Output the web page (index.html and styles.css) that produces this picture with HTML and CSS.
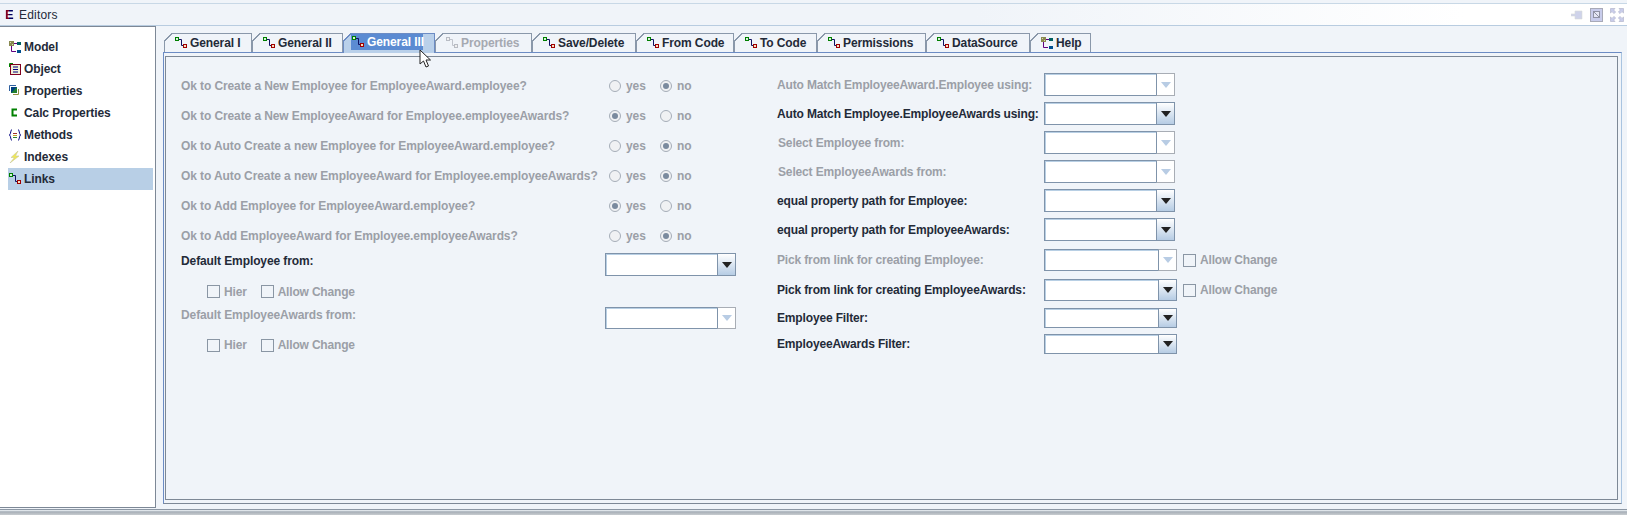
FILE: index.html
```html
<!DOCTYPE html>
<html lang="en">
<head>
    <meta charset="UTF-8">
    <title>Editors</title>
    <link rel="stylesheet" href="styles.css">
</head>
<body>
    <svg class="icon-defs" width="0" height="0">
        <symbol id="link" viewBox="0 0 12 12">
            <path d="M4 2.5H6.5V8.5H8" fill="none" stroke="#101060"/>
            <rect x="0.5" y="0.5" width="3" height="3" fill="#d8f0d8" stroke="#008000"/>
            <rect x="8.5" y="7.5" width="3" height="3" fill="#f8e0c0" stroke="#a00000"/>
        </symbol>
        <symbol id="link-off" viewBox="0 0 12 12">
            <path d="M4 2.5H6.5V8.5H8" fill="none" stroke="#c0c4cc"/>
            <rect x="0.5" y="0.5" width="3" height="3" fill="#f0f0f0" stroke="#b8bcc4"/>
            <rect x="8.5" y="7.5" width="3" height="3" fill="#f0f0f0" stroke="#b8bcc4"/>
        </symbol>
        <symbol id="model" viewBox="0 0 12 12">
            <rect x="0" y="0" width="5" height="5" fill="#8a8a50"/>
            <rect x="1" y="1" width="1" height="1" fill="#d8d8b0"/>
            <rect x="3" y="3" width="1" height="1" fill="#d8d8b0"/>
            <path d="M2.5 5V10.5H7M5 2.5H8" fill="none" stroke="#600080"/>
            <rect x="8" y="1" width="4" height="3" fill="#006060"/>
            <rect x="8" y="9" width="4" height="3" fill="#005090"/>
        </symbol>
    </svg>

    <div class="top-edge"></div>

    <header class="title-bar">
        <span class="title-logo">E</span>
        <span class="title-text">Editors</span>
        <div class="title-tools">
            <svg width="12" height="10" viewBox="0 0 12 10">
                <path d="M0 4H4V1H11V9H4V6H0Z" fill="#cfd3ea" stroke="#d8dcd8" stroke-width="0.6"/>
            </svg>
            <svg width="13" height="14" viewBox="0 0 13 14">
                <rect x="0.5" y="0.5" width="12" height="13" fill="#c8cceb" stroke="#a8aab8"/>
                <rect x="3.5" y="3.5" width="6" height="6" fill="#e4e6f4" stroke="#8f92a4"/>
                <path d="M3 3L10 10" stroke="#8f92a4"/>
            </svg>
            <svg width="14" height="14" viewBox="0 0 14 14" fill="#c8cceb" stroke="#b4b8cc" stroke-width="0.7">
                <path d="M0.5 0.5H5L3.6 2L5.6 4L4 5.6L2 3.6L0.5 5Z"/>
                <path d="M13.5 0.5H9L10.4 2L8.4 4L10 5.6L12 3.6L13.5 5Z"/>
                <path d="M0.5 13.5H5L3.6 12L5.6 10L4 8.4L2 10.4L0.5 9Z"/>
                <path d="M13.5 13.5H9L10.4 12L8.4 10L10 8.4L12 10.4L13.5 9Z"/>
            </svg>
        </div>
    </header>

    <div class="workspace">
        <!-- left tree -->
        <nav class="sidebar">
            <div class="side-item">
                <svg class="side-icon" viewBox="0 0 12 12"><use href="#model"/></svg>Model
            </div>
            <div class="side-item">
                <svg class="side-icon" viewBox="0 0 12 12">
                    <rect x="1.5" y="1.5" width="10" height="10" fill="#f0f0d8" stroke="#800020"/>
                    <path d="M0.5 4V0.5H4" fill="none" stroke="#008000"/>
                    <path d="M4 4H9M4 6.5H9M4 9H9" stroke="#000080" stroke-width="1.2"/>
                </svg>Object
            </div>
            <div class="side-item">
                <svg class="side-icon" viewBox="0 0 12 12">
                    <path d="M0.5 6V0.5H7" fill="none" stroke="#3060a0"/>
                    <rect x="2" y="2" width="6" height="6" fill="#004080"/>
                    <path d="M8 2L2 8H8Z" fill="#208030"/>
                    <path d="M9.5 4V9.5H4" fill="none" stroke="#909040"/>
                </svg>Properties
            </div>
            <div class="side-item">
                <svg class="side-icon" viewBox="0 0 12 12">
                    <path d="M8 2.5H3.5V8.5H8" fill="none" stroke="#008000" stroke-width="2"/>
                </svg>Calc Properties
            </div>
            <div class="side-item">
                <svg class="side-icon" viewBox="0 0 12 12">
                    <path d="M3 0.5C1.5 0.5 2 5 0.5 6C2 7 1.5 11.5 3 11.5M9 0.5C10.5 0.5 10 5 11.5 6C10 7 10.5 11.5 9 11.5" fill="none" stroke="#000080"/>
                    <path d="M4 4.5H8" stroke="#a03030"/>
                    <path d="M4 6.5H8" stroke="#c0a020"/>
                    <path d="M4 8.5H8" stroke="#308030"/>
                </svg>Methods
            </div>
            <div class="side-item">
                <svg class="side-icon" viewBox="0 0 12 12">
                    <path d="M9 0L2 6.5H5.5L1 12L10 5H6.5Z" fill="#f2ea50" stroke="#c8c8a0" stroke-width="0.6"/>
                </svg>Indexes
            </div>
            <div class="side-item side-item-active">
                <svg class="side-icon" viewBox="0 0 12 12"><use href="#link"/></svg>Links
            </div>
        </nav>

        <main class="editor">
            <div class="tabs">
                <div class="tab tab-1"><svg class="tab-icon"><use href="#link"/></svg>General I</div>
                <div class="tab tab-2"><svg class="tab-icon"><use href="#link"/></svg>General II</div>
                <div class="tab tab-3 tab-active"><span class="tab-focus"><svg class="tab-icon"><use href="#link"/></svg>General III</span></div>
                <div class="tab tab-4 tab-off"><svg class="tab-icon"><use href="#link-off"/></svg>Properties</div>
                <div class="tab tab-5"><svg class="tab-icon"><use href="#link"/></svg>Save/Delete</div>
                <div class="tab tab-6"><svg class="tab-icon"><use href="#link"/></svg>From Code</div>
                <div class="tab tab-7"><svg class="tab-icon"><use href="#link"/></svg>To Code</div>
                <div class="tab tab-8"><svg class="tab-icon"><use href="#link"/></svg>Permissions</div>
                <div class="tab tab-9"><svg class="tab-icon"><use href="#link"/></svg>DataSource</div>
                <div class="tab tab-10"><svg class="tab-icon"><use href="#model"/></svg>Help</div>
            </div>

            <div class="pane">
                <div class="pane-inner">
                    <section class="col-left">
                        <div class="q-row">
                            <span class="q-label off">Ok to Create a New Employee for EmployeeAward.employee?</span>
                            <span class="opt off"><i class="radio"></i>yes</span>
                            <span class="opt off"><i class="radio radio-on"></i>no</span>
                        </div>
                        <div class="q-row">
                            <span class="q-label off">Ok to Create a New EmployeeAward for Employee.employeeAwards?</span>
                            <span class="opt off"><i class="radio radio-on"></i>yes</span>
                            <span class="opt off"><i class="radio"></i>no</span>
                        </div>
                        <div class="q-row">
                            <span class="q-label off">Ok to Auto Create a new Employee for EmployeeAward.employee?</span>
                            <span class="opt off"><i class="radio"></i>yes</span>
                            <span class="opt off"><i class="radio radio-on"></i>no</span>
                        </div>
                        <div class="q-row">
                            <span class="q-label off">Ok to Auto Create a new EmployeeAward for Employee.employeeAwards?</span>
                            <span class="opt off"><i class="radio"></i>yes</span>
                            <span class="opt off"><i class="radio radio-on"></i>no</span>
                        </div>
                        <div class="q-row">
                            <span class="q-label off">Ok to Add Employee for EmployeeAward.employee?</span>
                            <span class="opt off"><i class="radio radio-on"></i>yes</span>
                            <span class="opt off"><i class="radio"></i>no</span>
                        </div>
                        <div class="q-row">
                            <span class="q-label off">Ok to Add EmployeeAward for Employee.employeeAwards?</span>
                            <span class="opt off"><i class="radio"></i>yes</span>
                            <span class="opt off"><i class="radio radio-on"></i>no</span>
                        </div>

                        <div class="default-row">
                            <span class="default-label">Default Employee from:</span>
                            <div class="combo combo-left"><div class="combo-field"></div><div class="combo-btn"><b></b></div></div>
                        </div>
                        <div class="check-row">
                            <span class="check off"><i class="box"></i>Hier</span>
                            <span class="check off"><i class="box"></i>Allow Change</span>
                        </div>
                        <div class="default-row default-row-2">
                            <span class="default-label off">Default EmployeeAwards from:</span>
                            <div class="combo combo-left combo-off"><div class="combo-field"></div><div class="combo-btn"><b></b></div></div>
                        </div>
                        <div class="check-row check-row-2">
                            <span class="check off"><i class="box"></i>Hier</span>
                            <span class="check off"><i class="box"></i>Allow Change</span>
                        </div>
                    </section>

                    <section class="col-right">
                        <div class="m-row">
                            <span class="m-label off">Auto Match EmployeeAward.Employee using:</span>
                            <div class="combo combo-off"><div class="combo-field"></div><div class="combo-btn"><b></b></div></div>
                        </div>
                        <div class="m-row">
                            <span class="m-label">Auto Match Employee.EmployeeAwards using:</span>
                            <div class="combo"><div class="combo-field"></div><div class="combo-btn"><b></b></div></div>
                        </div>
                        <div class="m-row">
                            <span class="m-label m-label-in off">Select Employee from:</span>
                            <div class="combo combo-off"><div class="combo-field"></div><div class="combo-btn"><b></b></div></div>
                        </div>
                        <div class="m-row">
                            <span class="m-label m-label-in off">Select EmployeeAwards from:</span>
                            <div class="combo combo-off"><div class="combo-field"></div><div class="combo-btn"><b></b></div></div>
                        </div>
                        <div class="m-row">
                            <span class="m-label">equal property path for Employee:</span>
                            <div class="combo"><div class="combo-field"></div><div class="combo-btn"><b></b></div></div>
                        </div>
                        <div class="m-row m-row-last">
                            <span class="m-label">equal property path for EmployeeAwards:</span>
                            <div class="combo"><div class="combo-field"></div><div class="combo-btn"><b></b></div></div>
                        </div>
                        <div class="m-row m-row-pick">
                            <span class="m-label off">Pick from link for creating Employee:</span>
                            <div class="combo combo-wide combo-off"><div class="combo-field"></div><div class="combo-btn"><b></b></div></div>
                            <span class="check check-side off"><i class="box"></i>Allow Change</span>
                        </div>
                        <div class="m-row m-row-pick m-row-pick-end">
                            <span class="m-label">Pick from link for creating EmployeeAwards:</span>
                            <div class="combo combo-wide"><div class="combo-field"></div><div class="combo-btn"><b></b></div></div>
                            <span class="check check-side off"><i class="box"></i>Allow Change</span>
                        </div>
                        <div class="m-row m-row-filter">
                            <span class="m-label">Employee Filter:</span>
                            <div class="combo combo-wide"><div class="combo-field"></div><div class="combo-btn"><b></b></div></div>
                        </div>
                        <div class="m-row m-row-filter">
                            <span class="m-label">EmployeeAwards Filter:</span>
                            <div class="combo combo-wide"><div class="combo-field"></div><div class="combo-btn"><b></b></div></div>
                        </div>
                    </section>
                </div>
            </div>

            <!-- mouse pointer caught in the screenshot -->
            <svg class="pointer" width="13" height="20" viewBox="0 0 13 20">
                <path d="M1 1V15L4.5 12L7 18L9.5 17L7 11H11.5Z" fill="#fff" stroke="#222" stroke-width="1"/>
            </svg>
        </main>
    </div>

    <div class="bottom-edge"></div>
</body>
</html>
```

FILE: styles.css
```css
* {
    box-sizing: border-box;
}

html, body {
    height: 100%;
}

body {
    margin: 0;
    display: flex;
    flex-direction: column;
    overflow: hidden;
    background-color: #f0f4f9;
    color: #232a38;
    font-family: "Liberation Sans", Arial, sans-serif;
    font-size: 12px;
    font-weight: bold;
    letter-spacing: -0.1px;
}

.icon-defs {
    position: absolute;
}

.off {
    color: #9b9fa7;
}

/* Top bar */
.top-edge {
    height: 4px;
    border-bottom: 1px solid #c8d8e6;
}

.title-bar {
    height: 22px;
    display: flex;
    align-items: center;
    padding: 0 3px 0 5px;
    background: linear-gradient(to right, #f0f4f9, #f0f4f9 60%, #ffffff 90%);
    border-bottom: 1px solid #b8cce0;
}

.title-logo {
    width: 9px;
    margin-right: 5px;
    font-size: 13px;
    line-height: 12px;
    color: transparent;
    background: linear-gradient(to right, #800020 50%, #000060 50%);
    -webkit-background-clip: text;
    background-clip: text;
}

.title-text {
    font-weight: normal;
    letter-spacing: 0.2px;
}

.title-tools {
    margin-left: auto;
    display: flex;
    align-items: center;
    gap: 7px;
}

/* Main area */
.workspace {
    flex: 1;
    display: flex;
    min-height: 0;
    position: relative;
}

.sidebar {
    width: 156px;
    height: 482px;
    padding: 9px 2px 0 8px;
    background-color: #ffffff;
    border-top: 1px solid #7d8896;
    border-right: 1px solid #7d8896;
    border-bottom: 1px solid #7d8896;
}

.side-item {
    height: 22px;
    display: flex;
    align-items: center;
}

.side-item-active {
    background-color: #b8cfe6;
}

.side-icon {
    width: 12px;
    height: 12px;
    margin: 0 3px 0 1px;
}

.editor {
    flex: 1;
    padding: 7px 5px 0 7px;
}

/* Tabs */
.tabs {
    display: flex;
    height: 19px;
    padding-left: 1px;
}

.tab {
    position: relative;
    display: flex;
    align-items: center;
    height: 19px;
    padding-left: 10px;
    border-top: 1px solid #8a98aa;
    border-right: 1px solid #8a98aa;
    border-left: 1px solid #8a98aa;
    background-color: #f0f4f9;
}

.tab::before {
    content: "";
    position: absolute;
    left: -1px;
    top: -1px;
    width: 8px;
    height: 8px;
    background: linear-gradient(135deg, #f0f4f9 0, #f0f4f9 48%, #8a98aa 48%, #8a98aa 58%, transparent 58%);
}

.tab-1 { width: 88px; }
.tab-2 { width: 91px; }
.tab-3 { width: 92px; padding-left: 7px; }
.tab-4 { width: 97px; }
.tab-5 { width: 104px; }
.tab-6 { width: 98px; }
.tab-7 { width: 83px; }
.tab-8 { width: 109px; }
.tab-9 { width: 104px; }
.tab-10 { width: 61px; }

.tab-off {
    color: #a5a9b1;
}

.tab-active {
    height: 20px;
    background-color: #b9d0ea;
    border-color: #6c8cc4;
    z-index: 1;
    color: #ffffff;
}

.tab-active::before {
    background: linear-gradient(135deg, #f0f4f9 0, #f0f4f9 48%, #6c8cc4 48%, #6c8cc4 58%, transparent 58%);
}

.tab-focus {
    display: flex;
    align-items: center;
    align-self: flex-start;
    height: 16px;
    width: 72px;
    padding-left: 1px;
    background-color: #5b8bd2;
    white-space: nowrap;
}

.tab-icon {
    width: 12px;
    height: 12px;
    margin-right: 3px;
    flex-shrink: 0;
}

/* Tab pane has the double border of the swing look */
.pane {
    height: 452px;
    padding: 3px 3px 3px 1px;
    border: 1px solid #6c8cc4;
    border-right-color: #a9c4e0;
    border-bottom-color: #7d8896;
}

.pane-inner {
    height: 100%;
    display: flex;
    border: 1px solid #7d8896;
    padding: 14px 0 0 15px;
}

.col-left {
    width: 596px;
}

.q-row {
    display: flex;
    align-items: center;
    height: 30px;
}

.q-label {
    width: 428px;
    white-space: nowrap;
}

.opt {
    width: 51px;
    display: flex;
    align-items: center;
    gap: 5px;
}

.radio {
    position: relative;
    width: 12px;
    height: 12px;
    border: 1px solid #a5adb8;
    border-radius: 50%;
    background-color: #f0f1f3;
}

.radio-on::after {
    content: "";
    position: absolute;
    left: 2px;
    top: 2px;
    width: 6px;
    height: 6px;
    border-radius: 50%;
    background-color: #7a8a9e;
}

.default-row {
    display: flex;
    height: 23px;
    margin-top: 2px;
}

.default-row-2 {
    height: 22px;
    margin-top: 0;
}

.default-label {
    width: 424px;
    line-height: 17px;
    white-space: nowrap;
}

.check-row {
    display: flex;
    align-items: center;
    height: 31px;
    gap: 14px;
    padding-left: 26px;
}

.check-row-2 {
    height: 32px;
}

.check {
    display: flex;
    align-items: center;
    gap: 4px;
    white-space: nowrap;
    letter-spacing: -0.18px;
}

.box {
    width: 13px;
    height: 13px;
    border: 1px solid #8a96a4;
    background-color: #f0f4f9;
}

/* Comboboxes */
.combo {
    width: 131px;
    height: 100%;
    display: flex;
    flex-shrink: 0;
}

.combo-left {
    width: 131px;
}

.combo-wide {
    width: 133px;
}

.combo-field {
    flex: 1;
    background-color: #ffffff;
    border: 1px solid #7f93aa;
    box-shadow: inset 1px 1px 0 #b8cfe4;
}

.combo-btn {
    width: 19px;
    display: flex;
    align-items: center;
    justify-content: center;
    margin-left: -1px;
    border: 1px solid #7f93aa;
    background: linear-gradient(to bottom, #ffffff, #b6cce4);
}

.combo-btn b {
    width: 0;
    height: 0;
    border-top: 6px solid #222222;
    border-left: 5px solid transparent;
    border-right: 5px solid transparent;
}

.combo-off .combo-btn {
    border-color: #a8adb5;
    border-left-color: #7f93aa;
    background: #ffffff;
}

.combo-off .combo-btn b {
    border-top-color: #b8cce4;
}

/* Right column */
.col-right {
    flex: 1;
    padding-top: 2px;
}

.m-row {
    display: flex;
    align-items: center;
    height: 23px;
    margin-bottom: 6px;
}

.m-row-last {
    margin-bottom: 8px;
}

.m-row-pick {
    height: 22px;
    margin-bottom: 8px;
}

.m-row-pick-end {
    margin-bottom: 7px;
}

.m-row-filter {
    height: 20px;
    margin-bottom: 6px;
}

.m-label {
    width: 267px;
    white-space: nowrap;
    letter-spacing: -0.15px;
}

.m-label-in {
    padding-left: 1px;
}

.check-side {
    margin-left: 6px;
}

/* Pointer */
.pointer {
    position: absolute;
    left: 419px;
    top: 23px;
    z-index: 2;
}

.bottom-edge {
    height: 6px;
    background: linear-gradient(to bottom, #8c97a4 0, #8c97a4 1px, #dfe5ea 1px, #dfe5ea 2px, #b4bcc4 2px, #b4bcc4 3px, #a8b0b8 3px, #c8ccd0 6px);
}
```
